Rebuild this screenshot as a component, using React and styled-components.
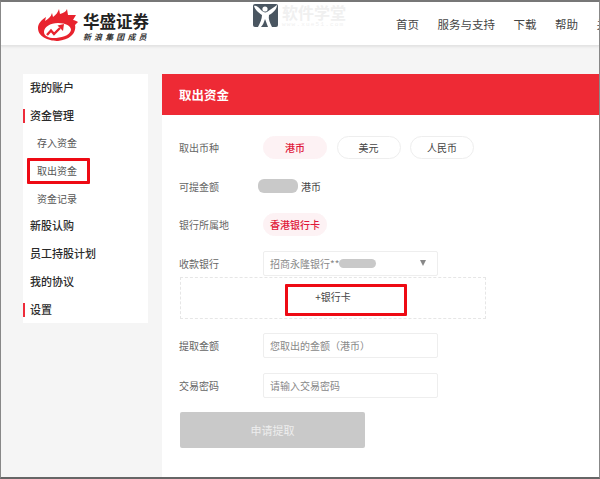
import React from "react";
import styled, { createGlobalStyle } from "styled-components";

const Global = createGlobalStyle`
  html, body { margin: 0; padding: 0; background: #f5f5f5; }
  *, *::before, *::after { box-sizing: border-box; }
  body { font-family: "Noto Sans CJK SC", "Liberation Sans", sans-serif; }
`;

const Frame = styled.div`
  width: 600px;
  height: 479px;
  overflow: hidden;
  background: #f5f5f5;
  border-top: 2px solid #777;
  border-left: 1px solid #888;
  border-right: 1px solid #888;
  border-bottom: 2px solid #666;
`;

const Header = styled.header`
  height: 44px;
  background: #fff;
  border-bottom: 1px solid #e4e4e4;
  box-shadow: 0 1px 2px #e2e2e2;
  display: flex;
  align-items: flex-start;
  overflow: hidden;
  white-space: nowrap;
`;

const Logo = styled.div`
  display: flex;
  flex: none;
  gap: 4px;
  margin: 6px 0 0 36px;
  width: 216px;
`;

const LogoText = styled.div`
  display: flex;
  flex-direction: column;
  padding-top: 2.5px;
`;

const LogoName = styled.div`
  font-size: 16.5px;
  line-height: 20px;
  font-weight: 700;
  color: #222;
`;

const LogoSub = styled.div`
  font-size: 8px;
  line-height: 10px;
  margin-top: 1.5px;
  font-weight: 700;
  font-style: italic;
  color: #333;
  letter-spacing: 3.1px;
`;

const Watermark = styled.div`
  display: flex;
  flex: none;
  gap: 4px;
  width: 143px;
  margin-top: 2px;
`;

const WatermarkText = styled.div`
  display: flex;
  flex-direction: column;
  color: #f0f0f0;
`;

const WatermarkName = styled.div`
  font-size: 16px;
  line-height: 17px;
  font-weight: 700;
`;

const WatermarkUrl = styled.div`
  font-size: 6px;
  line-height: 7px;
  letter-spacing: 1.2px;
  font-family: "Liberation Mono", monospace;
`;

const Nav = styled.nav`
  display: flex;
  flex: none;
  gap: 18.5px;
  margin-top: 14px;
  font-size: 11.5px;
  line-height: 17px;
  color: #444;
`;

const Body = styled.div`
  display: flex;
  align-items: flex-start;
  gap: 14px;
  padding: 28px 0 0 22px;
`;

const Sidebar = styled.aside`
  width: 125px;
  background: #fff;
  flex: none;
`;

const MenuItem = styled.div`
  position: relative;
  height: 27.7px;
  line-height: 27.7px;
  padding-left: ${(p) => (p.$sub ? "14px" : "7px")};
  font-size: ${(p) => (p.$sub ? "10px" : "11px")};
  font-weight: ${(p) => (p.$sub ? 400 : 500)};
  color: ${(p) => (p.$sub ? "#555" : "#2a2a2a")};

  ${(p) =>
    p.$marked &&
    `&::before {
      content: "";
      position: absolute;
      left: 0;
      top: 7px;
      width: 1.5px;
      height: 14px;
      background: #ee2b3a;
    }`}

  ${(p) =>
    p.$boxed &&
    `&::after {
      content: "";
      position: absolute;
      left: 4px;
      top: 1px;
      width: 63px;
      height: 26px;
      border: 3px solid #ee0a14;
      border-radius: 1px;
    }`}
`;

const Main = styled.main`
  flex: 1;
  height: 404px;
  background: #fff;
`;

const Banner = styled.div`
  height: 41px;
  background: #ee2a35;
  color: #fff;
  font-size: 12.5px;
  font-weight: 700;
  line-height: 41px;
  padding-left: 17px;
`;

const Form = styled.div`
  display: flex;
  flex-direction: column;
  gap: 14px;
  padding: 20.5px 0 0 17px;
`;

const Row = styled.div`
  display: flex;
  align-items: center;
  height: ${(p) => (p.$tall ? "25px" : "24.5px")};
  margin-top: ${(p) => p.$mt || 0}px;
`;

const Label = styled.div`
  width: 84px;
  flex: none;
  font-size: 10px;
  color: #666;
`;

const Pills = styled.div`
  display: flex;
  gap: 9.5px;
`;

const Pill = styled.div`
  width: 64px;
  height: 23px;
  line-height: 21px;
  border-radius: 12px;
  text-align: center;
  font-size: 10px;
  border: 1px solid ${(p) => (p.$active ? "#fdf2f4" : "#eee")};
  background: ${(p) => (p.$active ? "#fdf2f4" : "#fff")};
  color: ${(p) => (p.$active ? "#e0183a" : "#444")};
  font-weight: ${(p) => (p.$active ? 500 : 400)};
`;

const Redacted = styled.span`
  display: inline-block;
  width: ${(p) => p.$w}px;
  height: ${(p) => p.$h}px;
  border-radius: 6px;
  background: #c9c9c9;
`;

const Amount = styled.div`
  display: flex;
  align-items: center;
  gap: 3px;
  font-size: 10px;
  color: #444;
  margin-left: -5px;
`;

const Field = styled.div`
  display: flex;
  align-items: center;
  width: 175px;
  height: 100%;
  padding: 0 6px;
  border: 1px solid #eee;
  border-radius: 2px;
  background: #fff;
  font-size: 10px;
  color: #888;
`;

const Arrow = styled.span`
  margin-left: auto;
  margin-right: 5px;
  width: 0;
  height: 0;
  border-left: 3px solid transparent;
  border-right: 3px solid transparent;
  border-top: 6px solid #888;
`;

const AddCard = styled.div`
  position: relative;
  width: 306px;
  height: 42px;
  margin: -12.5px 0 0 1px;
  border: 1px dashed #e6e6e6;
  text-align: center;
  padding-top: 11px;
  font-size: 10px;
  line-height: 16px;
  color: #444;
`;

const Callout = styled.div`
  position: absolute;
  left: 104px;
  top: 6px;
  width: 122px;
  height: 32px;
  border: 3px solid #ee0a14;
  border-radius: 1px;
`;

const Submit = styled.div`
  width: 185px;
  height: 36px;
  margin-left: 1px;
  border-radius: 2px;
  background: #c9c9c9;
  color: #eee;
  font-size: 11px;
  line-height: 36px;
  text-align: center;
`;

const FlameLogo = () => (
  <svg width="42" height="34" viewBox="37 8 42 34">
    <path
      fill="#e8232e"
      fillRule="evenodd"
      d="M38 28 C38 24 41 20 46 17 L45 21 C48 19 51 17 52 13 L53 17 C56 15 58 12 59 9 L60 14 C63 13 66 12 67 9 L68 15 C71 15 74 15 76 15 L73 20 C75 20 76 21 78 22 L75 25 C76 29 74 34 71 36 C68 39 63 40 58 41 C51 41 38 38 38 28 Z
      M44 32 C44 36 49 38 54 38 C60 38 70 36 71 30 C71 26 66 23 58 23 C50 23 44 27 44 32 Z"
    />
    <path
      fill="none"
      stroke="#e8232e"
      strokeWidth="2.4"
      d="M47 35 L51 30.5 L54 34 L60 28"
    />
    <path fill="#e8232e" d="M57.5 25.5 L64 24 L63 31 Z" />
  </svg>
);

const WatermarkIcon = () => (
  <svg width="25" height="23" viewBox="0 0 25 23">
    <rect width="25" height="23" rx="2" fill="#4a5661" />
    <circle cx="12" cy="5" r="2.6" fill="#fff" />
    <path
      fill="#fff"
      d="M1 2 C4 1 6 4 8 6 C10 8 12 9 14 8 C17 6 21 3 24 1 C24 5 20 9 16 11 C15 15 17 19 19 23 L15 23 C14 20 13 18 12 15 C11 18 10 21 8 23 L5 23 C7 19 9 15 9 11 C6 9 2 6 1 2 Z"
    />
  </svg>
);

function App() {
  return (
    <Frame>
      <Global />
      <Header>
        <Logo>
          <FlameLogo />
          <LogoText>
            <LogoName>华盛证券</LogoName>
            <LogoSub>新浪集团成员</LogoSub>
          </LogoText>
        </Logo>
        <Watermark>
          <WatermarkIcon />
          <WatermarkText>
            <WatermarkName>软件学堂</WatermarkName>
            <WatermarkUrl>www.xue51.com</WatermarkUrl>
          </WatermarkText>
        </Watermark>
        <Nav>
          <span>首页</span>
          <span>服务与支持</span>
          <span>下载</span>
          <span>帮助</span>
          <span>关于</span>
        </Nav>
      </Header>
      <Body>
        <Sidebar>
          <MenuItem>我的账户</MenuItem>
          <MenuItem $marked>资金管理</MenuItem>
          <MenuItem $sub>存入资金</MenuItem>
          <MenuItem $sub $boxed>取出资金</MenuItem>
          <MenuItem $sub>资金记录</MenuItem>
          <MenuItem>新股认购</MenuItem>
          <MenuItem>员工持股计划</MenuItem>
          <MenuItem>我的协议</MenuItem>
          <MenuItem $marked>设置</MenuItem>
        </Sidebar>
        <Main>
          <Banner>取出资金</Banner>
          <Form>
            <Row>
              <Label>取出币种</Label>
              <Pills>
                <Pill $active>港币</Pill>
                <Pill>美元</Pill>
                <Pill>人民币</Pill>
              </Pills>
            </Row>
            <Row>
              <Label>可提金额</Label>
              <Amount>
                <Redacted $w={40} $h={14} />
                港币
              </Amount>
            </Row>
            <Row>
              <Label>银行所属地</Label>
              <Pill $active>香港银行卡</Pill>
            </Row>
            <Row>
              <Label>收款银行</Label>
              <Field>
                招商永隆银行**
                <Redacted $w={37} $h={9} />
                <Arrow />
              </Field>
            </Row>
            <AddCard>
              +银行卡
              <Callout />
            </AddCard>
            <Row $tall>
              <Label>提取金额</Label>
              <Field>您取出的金额（港币）</Field>
            </Row>
            <Row $tall $mt={1}>
              <Label>交易密码</Label>
              <Field>请输入交易密码</Field>
            </Row>
            <Submit>申请提取</Submit>
          </Form>
        </Main>
      </Body>
    </Frame>
  );
}

export default App;
